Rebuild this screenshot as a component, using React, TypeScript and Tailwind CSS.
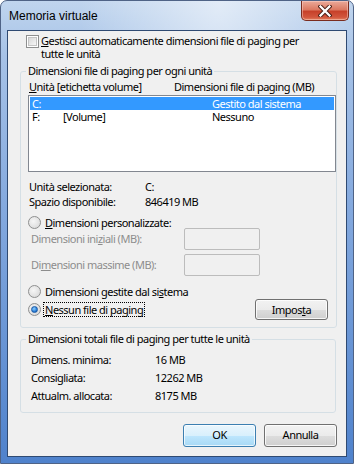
/**
 * Memoria virtuale - Windows 7 style virtual memory dialog
 */

const body = "font-['Noto_Sans',sans-serif] text-[11px] tracking-[-0.5px] text-black"

function CloseButton() {
  return (
    <div className="mr-[4px] h-[20px] w-[48px] rounded-b-[5px] border border-t-0 border-[#7a2c1f] bg-[linear-gradient(to_bottom,#eaaa9a_0%,#dc7a63_45%,#c7412a_55%,#d2563d_85%,#e2805f_100%)] shadow-[inset_0_0_0_1px_rgba(255,220,210,0.45)] flex items-center justify-center">
      <svg width="14" height="12" viewBox="0 0 14 12">
        <path d="M2.5 1.5 L11.5 10.5 M11.5 1.5 L2.5 10.5" stroke="#4a1f17" strokeWidth="4.2" strokeLinecap="square" />
        <path d="M2.5 1.5 L11.5 10.5 M11.5 1.5 L2.5 10.5" stroke="#ffffff" strokeWidth="2.3" strokeLinecap="square" />
      </svg>
    </div>
  )
}

function Checkbox() {
  return (
    <div className="h-[13px] w-[13px] shrink-0 border border-[#8e8f8f] bg-white p-[1px]">
      <div className="h-full w-full border border-[#c4c4c4] bg-[linear-gradient(135deg,#d8d8d8,#f6f6f6)]" />
    </div>
  )
}

function Radio({ checked }: { checked?: boolean }) {
  return (
    <div className="flex h-[13px] w-[13px] shrink-0 items-center justify-center rounded-full border border-[#8e8f8f] bg-[radial-gradient(circle_at_40%_40%,#f6f6f6,#d4d4d4)]">
      {checked && (
        <div className="h-[7px] w-[7px] rounded-full border border-[#1b5aa6] bg-[radial-gradient(circle_at_40%_35%,#8fd0ff,#2a7fd8_60%,#0c4a96)]" />
      )}
    </div>
  )
}

function Button({ label, primary }: { label: React.ReactNode; primary?: boolean }) {
  return (
    <div
      className={
        primary
          ? 'flex h-[23px] w-[73px] items-center justify-center rounded-[3px] border border-[#3c7fb1] bg-[linear-gradient(to_bottom,#eaf6fd_0%,#d9f0fc_50%,#bee6fd_51%,#a7d9f5_100%)] shadow-[inset_0_0_0_1px_rgba(255,255,255,0.7)]'
          : 'flex h-[23px] w-[73px] items-center justify-center rounded-[3px] border border-[#707070] bg-[linear-gradient(to_bottom,#f2f2f2_0%,#ebebeb_50%,#dddddd_51%,#cfcfcf_100%)] shadow-[inset_0_0_0_1px_rgba(255,255,255,0.8)]'
      }
    >
      {label}
    </div>
  )
}

export default function App() {
  return (
    <div className="relative flex h-[464px] w-[354px] flex-col overflow-hidden rounded-t-[7px] border border-[#4f6386] bg-[radial-gradient(ellipse_at_62%_0%,rgba(255,255,255,0.55),rgba(255,255,255,0)_45%),linear-gradient(to_bottom,#c0d5ee_0%,#a6c2e7_12%,#84a9de_45%,#4f82cc_100%)]">
      {/* Title bar */}
      <div className="flex h-[29px] shrink-0 items-start justify-between">
        <span className="ml-[8px] mt-[7px] font-['Liberation_Sans',sans-serif] text-[12px] leading-[16px] text-black">
          Memoria virtuale
        </span>
        <CloseButton />
      </div>

      {/* Client area */}
      <div className={`mx-[6px] mb-[6px] flex flex-1 flex-col border border-[#2f4a72] bg-[#f0f0f0] ${body}`}>
        <div className="flex pl-[18px] pt-[3px]">
          <div className="mt-[1px]">
            <Checkbox />
          </div>
          <div className="ml-[2px] whitespace-nowrap leading-[13px]">
            <u>G</u>estisci automaticamente dimensioni file di paging per
            <br />
            tutte le unità
          </div>
        </div>

        {/* Per-drive group */}
        <fieldset className="ml-[12px] mt-[4px] w-[316px] rounded-[3px] border border-[#d5dfe5]">
          <legend className="ml-[5px] px-[2px] leading-[14px]">Dimensioni file di paging per ogni unità</legend>
          <div className="pb-[7px] pl-[7px] pt-[2px]">
            <div className="flex h-[14px] items-center whitespace-nowrap leading-[14px]">
              <span className="w-[146px] pl-[1px]">
                <u>U</u>nità [etichetta volume]
              </span>
              <span>Dimensioni file di paging (MB)</span>
            </div>

            <div className="mt-[1px] h-[77px] w-[308px] border border-[#828790] bg-white p-[1px]">
              <div className="flex h-[13px] items-center whitespace-nowrap bg-[#3399ff] pl-[2px] leading-[13px] text-white">
                <span className="w-[31px]">C:</span>
                <span className="w-[149px]"></span>
                <span>Gestito dal sistema</span>
              </div>
              <div className="flex h-[13px] items-center whitespace-nowrap pl-[2px] leading-[13px]">
                <span className="w-[31px]">F:</span>
                <span className="w-[149px]">[Volume]</span>
                <span>Nessuno</span>
              </div>
            </div>

            <div className="mt-[7px] flex h-[15px] items-center pl-[1px] leading-[15px]">
              <span className="w-[116px]">Unità selezionata:</span>
              <span>C:</span>
            </div>
            <div className="flex h-[15px] items-center pl-[1px] leading-[15px]">
              <span className="w-[116px]">Spazio disponibile:</span>
              <span>846419 MB</span>
            </div>

            <div className="mt-[7px] flex h-[12px] items-center leading-[13px]">
              <Radio />
              <span className="ml-[4px]">
                <u>D</u>imensioni personalizzate:
              </span>
            </div>

            <div className="flex h-[22px] items-center text-[#8d8d8d]">
              <span className="w-[156px] pl-[3px]">
                Dimensioni ini<u>z</u>iali (MB):
              </span>
              <div className="h-[22px] w-[76px] rounded-[2px] border border-[#bcbcbc] bg-[#f0f0f0]" />
            </div>
            <div className="mt-[4px] flex h-[22px] items-center text-[#8d8d8d]">
              <span className="w-[156px] pl-[3px]">
                Di<u>m</u>ensioni massime (MB):
              </span>
              <div className="h-[22px] w-[76px] rounded-[2px] border border-[#bcbcbc] bg-[#f0f0f0]" />
            </div>

            <div className="mt-[8px] flex h-[14px] items-center leading-[13px]">
              <Radio />
              <span className="ml-[4px]">
                Dimensioni gestite dal si<u>s</u>tema
              </span>
            </div>

            <div className="mt-[1px] flex h-[21px] items-center justify-between leading-[13px]">
              <div className="flex items-center">
                <Radio checked />
                <span className="ml-[3px] px-[1px] outline outline-1 outline-dotted outline-black">
                  <u>N</u>essun file di paging
                </span>
              </div>
              <div className="mr-[8px] flex h-[21px] w-[73px] items-center justify-center rounded-[3px] border border-[#707070] bg-[linear-gradient(to_bottom,#f2f2f2_0%,#ebebeb_50%,#dddddd_51%,#cfcfcf_100%)] shadow-[inset_0_0_0_1px_rgba(255,255,255,0.8)]">
                <span>
                  Impos<u>t</u>a
                </span>
              </div>
            </div>
          </div>
        </fieldset>

        {/* Totals group */}
        <fieldset className="ml-[12px] mt-[4px] w-[316px] rounded-[3px] border border-[#d5dfe5]">
          <legend className="ml-[5px] px-[2px] leading-[14px]">Dimensioni totali file di paging per tutte le unità</legend>
          <div className="pb-[8px] pl-[10px] pt-[4px]">
            {[
              ['Dimens. minima:', '16 MB'],
              ['Consigliata:', '12262 MB'],
              ['Attualm. allocata:', '8175 MB'],
            ].map(([k, v]) => (
              <div key={k} className="flex h-[18px] items-center leading-[15px]">
                <span className="w-[124px]">{k}</span>
                <span>{v}</span>
              </div>
            ))}
          </div>
        </fieldset>

        <div className="mt-[11px] flex justify-end gap-[8px] pr-[9px]">
          <Button label="OK" primary />
          <Button label="Annulla" />
        </div>
      </div>
    </div>
  )
}
